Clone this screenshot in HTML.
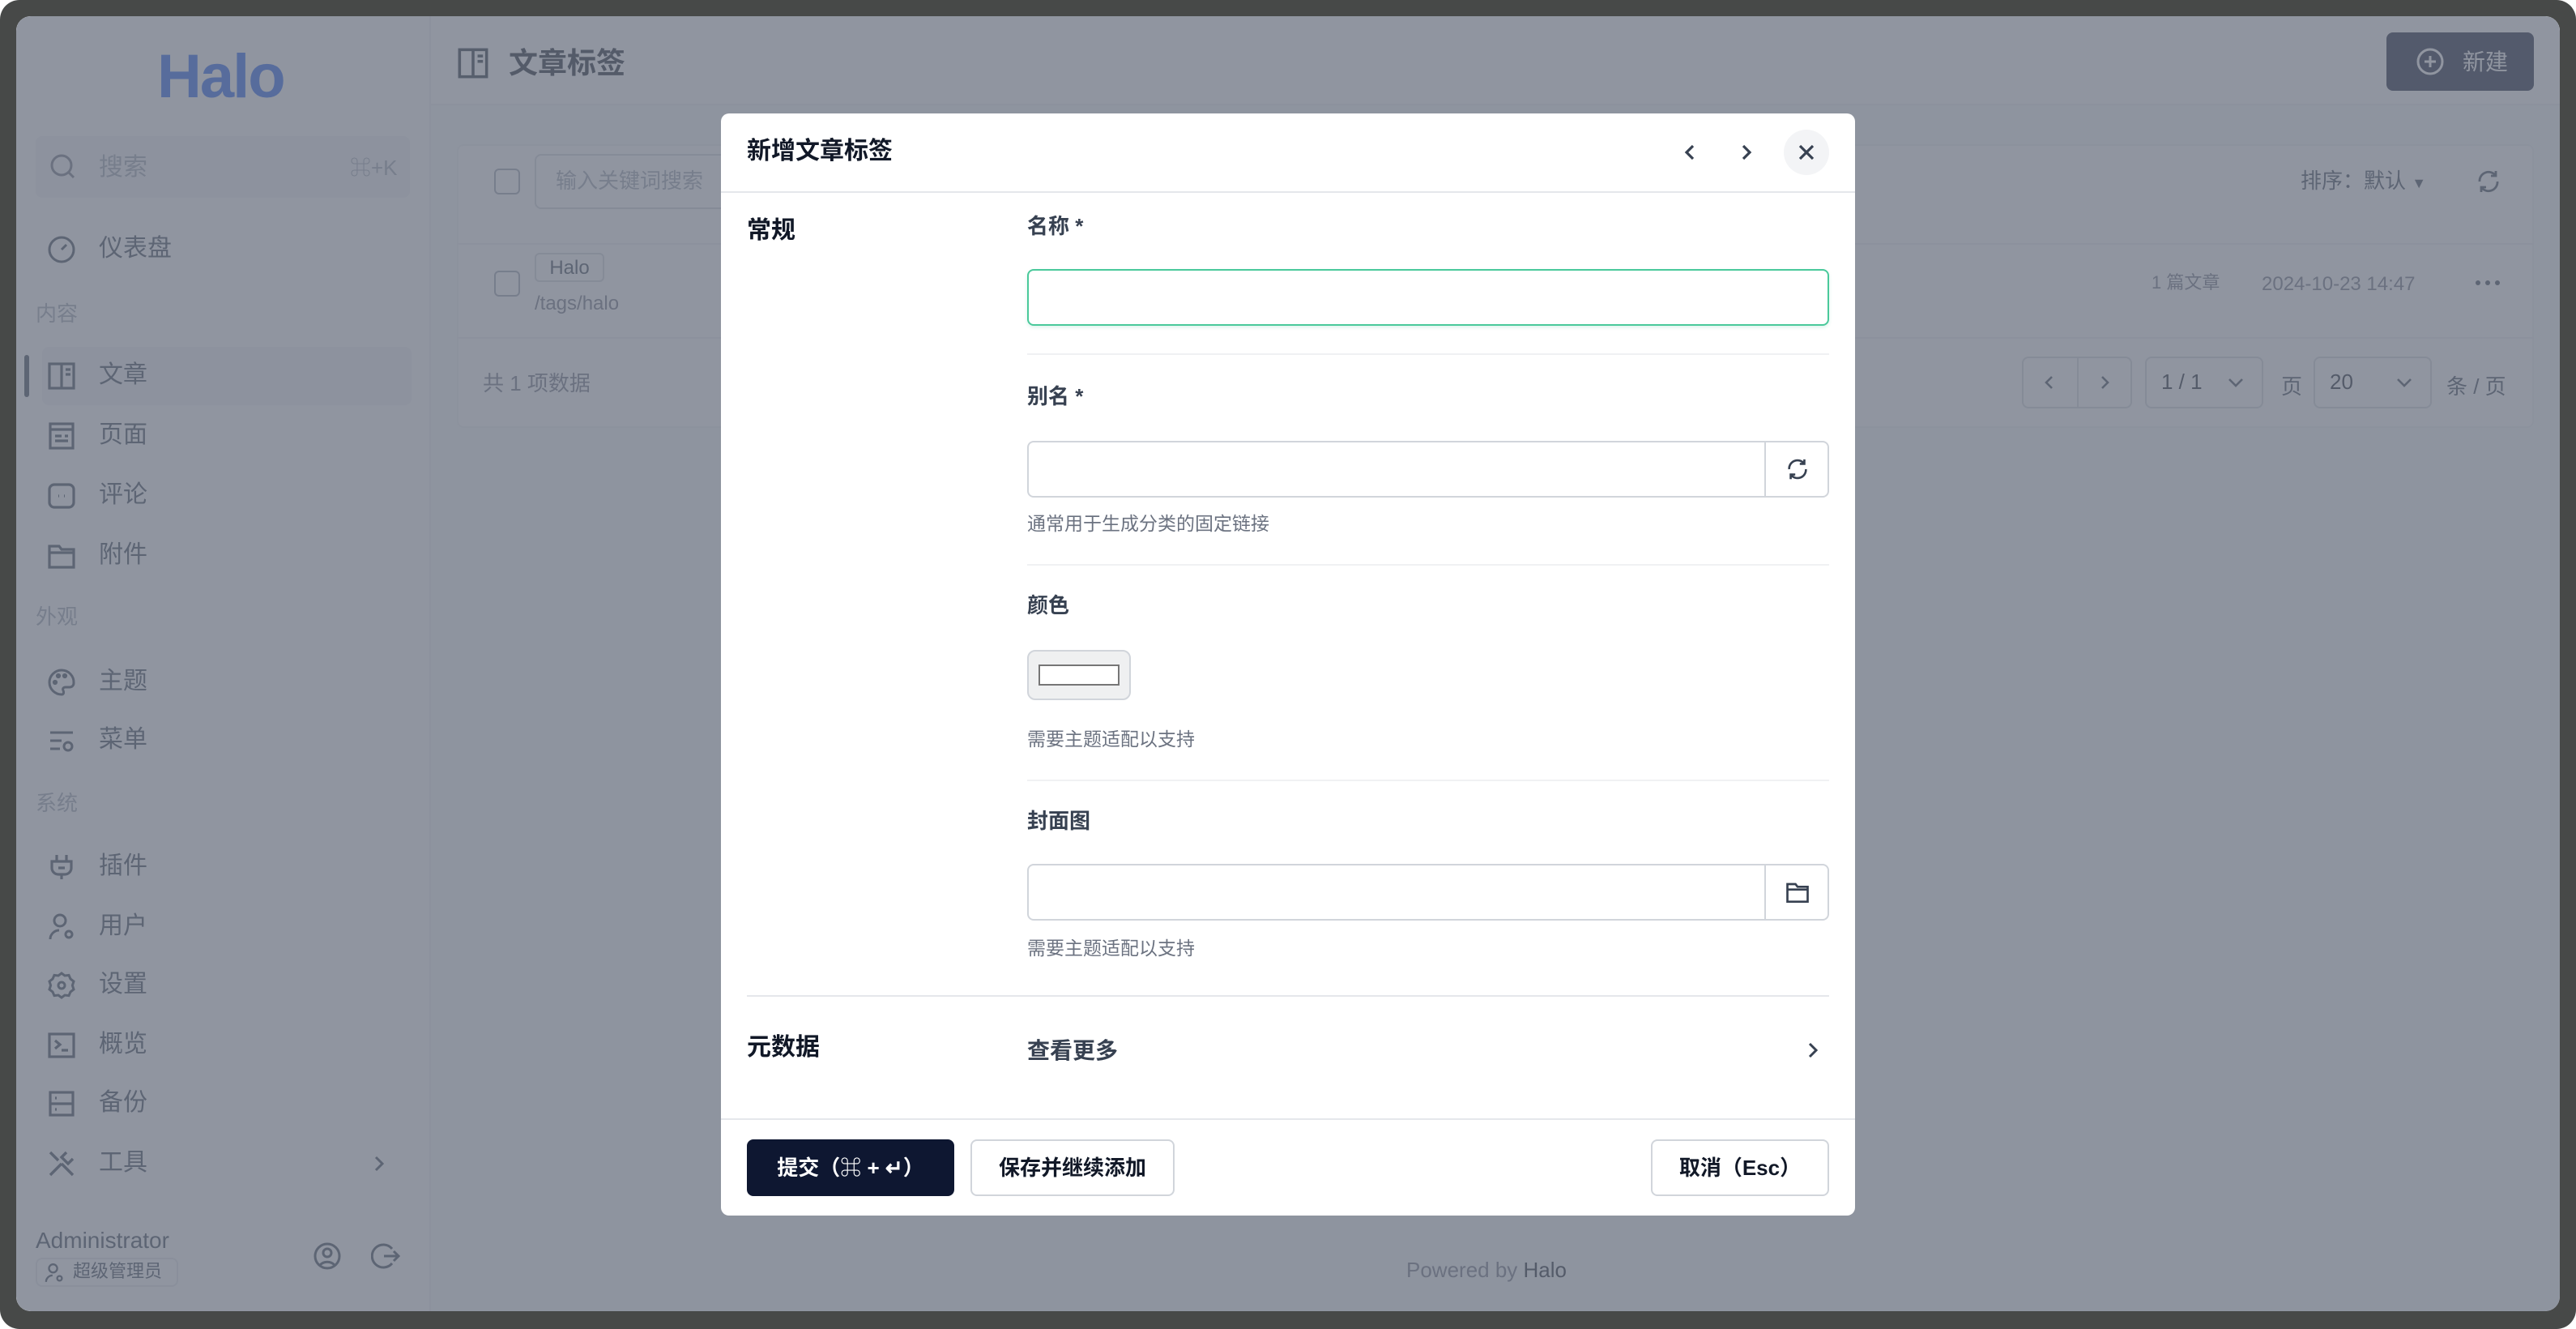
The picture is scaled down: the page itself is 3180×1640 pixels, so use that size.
<!DOCTYPE html>
<html><head><meta charset="utf-8">
<style>
*{box-sizing:border-box;margin:0;padding:0}
html,body{width:3180px;height:1640px;overflow:hidden;background:#fff}
#s{position:absolute;left:0;top:0;width:1590px;height:820px;transform:scale(2);transform-origin:0 0;font-family:"Liberation Sans","Noto Sans CJK SC",sans-serif;color:#1f2937}
.frame{position:absolute;left:0;top:0;width:1590px;height:820px;background:#474948;border-radius:12px}
.inner{position:absolute;left:10px;top:10px;width:1570px;height:799px;border-radius:9px;overflow:hidden;background:#f8fafc}
.a{position:absolute}
.side{position:absolute;left:0;top:0;width:256px;height:799px;background:#fff;border-right:1px solid #eef0f3}
.mi{position:absolute;left:0;height:20px;line-height:20px;font-size:15px;color:#374151}
.mi svg{position:absolute;left:19px;top:1px}
.mi span{position:absolute;left:51px;top:0;white-space:nowrap}
.lab{position:absolute;left:12px;font-size:13px;color:#9ca3af;line-height:16px}
.ov{position:absolute;left:0;top:0;width:1570px;height:799px;background:rgba(107,114,128,0.75)}
.modal{position:absolute;left:435px;top:60px;width:700px;height:680px;background:#fff;border-radius:5px;overflow:hidden}
.fl{position:absolute;left:189px;font-size:13px;font-weight:bold;color:#374151;line-height:18px}
.inp{position:absolute;left:189px;width:495px;height:35px;border:1px solid #d1d5db;border-radius:4px;background:#fff}
.help{position:absolute;left:189px;font-size:11.5px;color:#6b7280;line-height:16px}
.div{position:absolute;left:189px;width:495px;height:1px;background:#f0f1f3}
.btn{position:absolute;top:633px;height:35px;border:1px solid #d1d5db;border-radius:4px;font-size:13px;font-weight:bold;line-height:33px;text-align:center;background:#fff;color:#111827}
</style></head><body><div id="s">
<div class="frame"></div>
<div class="inner">
 <div class="side">
  <div class="a" style="left:87px;top:18px;font-size:38px;font-weight:bold;color:#1e5ef0;letter-spacing:-1px;line-height:40px">Halo</div>
  <div class="a" style="left:12px;top:74px;width:231px;height:38px;background:#f3f4f6;border-radius:4px"></div>
  <svg class="a" style="left:20px;top:84px" width="18" height="18" viewBox="0 0 18 18" fill="none" stroke="#6b7280" stroke-width="1.5"><circle cx="8" cy="8" r="6"/><path d="M12.5 12.5l3 3"/></svg>
  <div class="a" style="left:51px;top:84px;font-size:15px;color:#9ca3af;line-height:20px">搜索</div>
  <div class="a" style="left:206px;top:85px;font-size:13px;color:#9ca3af;line-height:18px">⌘+K</div>

  <div class="mi" style="top:134px"><svg width="18" height="18" viewBox="0 0 18 18" fill="none" stroke="#374151" stroke-width="1.5"><circle cx="9" cy="9" r="7.5"/><path d="M9 9l3-3M5 9h0M6 6h0M9 4.5h0"/></svg><span>仪表盘</span></div>
  <div class="lab" style="top:176px">内容</div>
  <div class="a" style="left:16px;top:204px;width:228px;height:36px;background:#f3f4f6;border-radius:4px"></div>
  <div class="a" style="left:5px;top:209px;width:3px;height:26px;background:#374151;border-radius:2px"></div>
  <div class="mi" style="top:212px"><svg width="18" height="18" viewBox="0 0 18 18" fill="none" stroke="#374151" stroke-width="1.6"><rect x="1.5" y="1.5" width="15" height="15"/><path d="M9 1.5v15M11.5 5h3M11.5 8h3"/></svg><span>文章</span></div>
  <div class="mi" style="top:249px"><svg width="18" height="18" viewBox="0 0 18 18" fill="none" stroke="#374151" stroke-width="1.6"><rect x="2" y="1.5" width="14" height="15"/><path d="M2 5h14M5 9h4M5 12h8M11 9h2"/></svg><span>页面</span></div>
  <div class="mi" style="top:286px"><svg width="18" height="18" viewBox="0 0 18 18" fill="none" stroke="#374151" stroke-width="1.6"><rect x="1.5" y="2" width="15" height="14" rx="3"/><path d="M7 9h.5M10.5 9h.5"/></svg><span>评论</span></div>
  <div class="mi" style="top:323px"><svg width="18" height="18" viewBox="0 0 18 18" fill="none" stroke="#374151" stroke-width="1.6"><path d="M1.5 3h6l1.5 2h7.5v11h-15zM1.5 7h15"/></svg><span>附件</span></div>
  <div class="lab" style="top:363px">外观</div>
  <div class="mi" style="top:401px"><svg width="18" height="18" viewBox="0 0 18 18" fill="none" stroke="#374151" stroke-width="1.5"><path d="M9 1.5a7.5 7.5 0 1 0 0 15c1.5 0 1.5-1.5 1-2.5s0-2 1.5-2H14a2.5 2.5 0 0 0 2.5-2.5A7.5 7.5 0 0 0 9 1.5z"/><circle cx="5" cy="9" r=".8"/><circle cx="7" cy="5" r=".8"/><circle cx="11" cy="5" r=".8"/></svg><span>主题</span></div>
  <div class="mi" style="top:437px"><svg width="18" height="18" viewBox="0 0 18 18" fill="none" stroke="#374151" stroke-width="1.5"><path d="M2 4h14M2 9h7M2 14h6"/><circle cx="13" cy="12.5" r="2.5"/></svg><span>菜单</span></div>
  <div class="lab" style="top:478px">系统</div>
  <div class="mi" style="top:515px"><svg width="18" height="18" viewBox="0 0 18 18" fill="none" stroke="#374151" stroke-width="1.6"><path d="M6 1.5v4M12 1.5v4M3 5.5h12v4a4 4 0 0 1-4 4H7a4 4 0 0 1-4-4zM9 13.5v3M7 9.5h4"/></svg><span>插件</span></div>
  <div class="mi" style="top:552px"><svg width="18" height="18" viewBox="0 0 18 18" fill="none" stroke="#374151" stroke-width="1.5"><circle cx="8" cy="5" r="3.5"/><path d="M2 16.5c0-3 2.5-5.5 5.5-5.5"/><circle cx="13.5" cy="13.5" r="2"/></svg><span>用户</span></div>
  <div class="mi" style="top:588px"><svg width="18" height="18" viewBox="0 0 18 18" fill="none" stroke="#374151" stroke-width="1.5"><path d="M9 1.5l2 1.5 2.5-.3 1 2.3 2 1.5-.8 2.5.8 2.5-2 1.5-1 2.3-2.5-.3-2 1.5-2-1.5-2.5.3-1-2.3-2-1.5.8-2.5-.8-2.5 2-1.5 1-2.3 2.5.3z"/><circle cx="9" cy="9" r="2"/></svg><span>设置</span></div>
  <div class="mi" style="top:625px"><svg width="18" height="18" viewBox="0 0 18 18" fill="none" stroke="#374151" stroke-width="1.6"><rect x="1.5" y="2" width="15" height="14"/><path d="M5 6l3 2.5L5 11M9 12h4"/></svg><span>概览</span></div>
  <div class="mi" style="top:661px"><svg width="18" height="18" viewBox="0 0 18 18" fill="none" stroke="#374151" stroke-width="1.6"><rect x="2" y="2" width="14" height="14"/><path d="M2 9h14M5 5.5h1M5 12.5h1"/></svg><span>备份</span></div>
  <div class="mi" style="top:698px"><svg width="18" height="18" viewBox="0 0 18 18" fill="none" stroke="#374151" stroke-width="1.7"><path d="M2 2l5 5M2 16l7-7M16 16L9 9M12 2l-3 3 4 4 3-3"/></svg><span>工具</span></div>
  <svg class="a" style="left:218px;top:702px" width="12" height="12" viewBox="0 0 12 12" fill="none" stroke="#374151" stroke-width="1.5"><path d="M4 2l4 4-4 4"/></svg>

  <div class="a" style="left:12px;top:746px;font-size:14px;color:#374151;line-height:18px">Administrator</div>
  <div class="a" style="left:12px;top:766px;width:88px;height:18px;border:1px solid #e5e7eb;border-radius:4px;font-size:11px;color:#374151;line-height:16px;padding-left:22px">超级管理员</div>
  <svg class="a" style="left:17px;top:769px" width="13" height="13" viewBox="0 0 18 18" fill="none" stroke="#374151" stroke-width="1.6"><circle cx="8" cy="5" r="3.5"/><path d="M2 16.5c0-3 2.5-5.5 5.5-5.5"/><circle cx="13.5" cy="13.5" r="2"/></svg>
  <svg class="a" style="left:183px;top:756px" width="18" height="18" viewBox="0 0 18 18" fill="none" stroke="#374151" stroke-width="1.5"><circle cx="9" cy="9" r="7.5"/><circle cx="9" cy="7" r="2.5"/><path d="M4.5 14.5c2.5-2.5 6.5-2.5 9 0"/></svg>
  <svg class="a" style="left:219px;top:756px" width="18" height="18" viewBox="0 0 18 18" fill="none" stroke="#374151" stroke-width="1.5"><path d="M13 4.5A7 7 0 1 0 13 13.5M8 9h9M14 6l3 3-3 3"/></svg>
 </div>

 <div class="a" style="left:256px;top:0;width:1314px;height:55px;background:#fff;border-bottom:1px solid #eef0f3"></div>
 <svg class="a" style="left:272px;top:19px" width="20" height="20" viewBox="0 0 18 18" fill="none" stroke="#1f2937" stroke-width="1.6"><rect x="1.5" y="1.5" width="15" height="15"/><path d="M9 1.5v15M11.5 5h3M11.5 8h3"/></svg>
 <div class="a" style="left:304px;top:18px;font-size:18px;font-weight:bold;color:#111827;line-height:22px">文章标签</div>
 <div class="a" style="left:1463px;top:10px;width:91px;height:36px;background:#0e1731;border-radius:4px"></div>
 <svg class="a" style="left:1481px;top:19px" width="18" height="18" viewBox="0 0 18 18" fill="none" stroke="#fff" stroke-width="1.5"><circle cx="9" cy="9" r="7.5"/><path d="M9 5.5v7M5.5 9h7"/></svg>
 <div class="a" style="left:1510px;top:19px;font-size:14px;color:#fff;line-height:18px">新建</div>

 <div class="a" style="left:272px;top:79px;width:1282px;height:175px;background:#fff;border-radius:4px;border:1px solid #f0f1f3"></div>
 <div class="a" style="left:272px;top:140px;width:1282px;height:1px;background:#eef0f3"></div>
 <div class="a" style="left:272px;top:198px;width:1282px;height:1px;background:#eef0f3"></div>
 <div class="a" style="left:295px;top:94px;width:16px;height:16px;border:1px solid #9ca3af;border-radius:3px"></div>
 <div class="a" style="left:320px;top:85px;width:200px;height:34px;border:1px solid #d1d5db;border-radius:4px;font-size:13px;color:#9ca3af;line-height:32px;padding-left:12px">输入关键词搜索</div>
 <div class="a" style="left:1410px;top:93px;font-size:13px;color:#374151;line-height:18px">排序：默认 <span style="font-size:9px">▼</span></div>
 <svg class="a" style="left:1518px;top:94px" width="16" height="16" viewBox="0 0 16 16" fill="none" stroke="#374151" stroke-width="1.4"><path d="M13.5 8A5.5 5.5 0 0 1 3.5 11.5M2.5 8A5.5 5.5 0 0 1 12.5 4.5M12.5 1.5v3h-3M3.5 14.5v-3h3"/></svg>
 <div class="a" style="left:295px;top:157px;width:16px;height:16px;border:1px solid #9ca3af;border-radius:3px"></div>
 <div class="a" style="left:320px;top:146px;width:43px;height:18px;border:1px solid #d1d5db;border-radius:3px;font-size:12px;color:#374151;line-height:16px;text-align:center">Halo</div>
 <div class="a" style="left:320px;top:169px;font-size:12px;color:#6b7280;line-height:16px">/tags/halo</div>
 <div class="a" style="left:1318px;top:157px;font-size:11px;color:#6b7280;line-height:16px">1 篇文章</div>
 <div class="a" style="left:1386px;top:157px;font-size:12px;color:#6b7280;line-height:16px">2024-10-23 14:47</div>
 <div class="a" style="left:1518px;top:163px;width:3px;height:3px;border-radius:2px;background:#374151;box-shadow:6px 0 #374151,12px 0 #374151"></div>
 <div class="a" style="left:288px;top:218px;font-size:13px;color:#6b7280;line-height:18px">共 1 项数据</div>
 <div class="a" style="left:1238px;top:210px;width:68px;height:32px;border:1px solid #d1d5db;border-radius:4px"></div>
 <div class="a" style="left:1272px;top:210px;width:1px;height:32px;background:#d1d5db"></div>
 <svg class="a" style="left:1249px;top:220px" width="12" height="12" viewBox="0 0 12 12" fill="none" stroke="#374151" stroke-width="1.3"><path d="M7.5 2.5L4 6l3.5 3.5"/></svg>
 <svg class="a" style="left:1283px;top:220px" width="12" height="12" viewBox="0 0 12 12" fill="none" stroke="#374151" stroke-width="1.3"><path d="M4.5 2.5L8 6 4.5 9.5"/></svg>
 <div class="a" style="left:1314px;top:210px;width:73px;height:32px;border:1px solid #d1d5db;border-radius:4px;font-size:13px;color:#111827;line-height:30px;padding-left:9px">1 / 1</div>
 <svg class="a" style="left:1364px;top:221px" width="12" height="10" viewBox="0 0 12 10" fill="none" stroke="#374151" stroke-width="1.3"><path d="M2 3l4 4 4-4"/></svg>
 <div class="a" style="left:1398px;top:218px;font-size:13px;color:#374151">页</div>
 <div class="a" style="left:1418px;top:210px;width:73px;height:32px;border:1px solid #d1d5db;border-radius:4px;font-size:13px;color:#111827;line-height:30px;padding-left:9px">20</div>
 <svg class="a" style="left:1468px;top:221px" width="12" height="10" viewBox="0 0 12 10" fill="none" stroke="#374151" stroke-width="1.3"><path d="M2 3l4 4 4-4"/></svg>
 <div class="a" style="left:1500px;top:218px;font-size:13px;color:#374151">条 / 页</div>
 <div class="a" style="left:858px;top:766px;font-size:13px;color:#6b7280;line-height:16px">Powered by <span style="color:#111827">Halo</span></div>

 <div class="ov"></div>

 <div class="modal">
  <div class="a" style="left:16px;top:14px;font-size:15px;font-weight:bold;color:#111827;line-height:20px">新增文章标签</div>
  <svg class="a" style="left:591px;top:17px" width="14" height="14" viewBox="0 0 14 14" fill="none" stroke="#374151" stroke-width="1.6"><path d="M9 3L5 7l4 4"/></svg>
  <svg class="a" style="left:626px;top:17px" width="14" height="14" viewBox="0 0 14 14" fill="none" stroke="#374151" stroke-width="1.6"><path d="M5 3l4 4-4 4"/></svg>
  <div class="a" style="left:656px;top:10px;width:28px;height:28px;border-radius:50%;background:#f3f4f6"></div>
  <svg class="a" style="left:663px;top:17px" width="14" height="14" viewBox="0 0 14 14" fill="none" stroke="#374151" stroke-width="1.6"><path d="M3 3l8 8M11 3l-8 8"/></svg>
  <div class="a" style="left:0;top:48px;width:700px;height:1px;background:#e5e7eb"></div>

  <div class="a" style="left:16px;top:63px;font-size:15px;font-weight:bold;color:#111827;line-height:20px">常规</div>
  <div class="fl" style="top:61px">名称 *</div>
  <div class="inp" style="top:96px;border-color:#4ac99b;box-shadow:0 1px 2px rgba(74,201,155,.2)"></div>
  <div class="div" style="top:148px"></div>
  <div class="fl" style="top:166px">别名 *</div>
  <div class="inp" style="top:202px"></div>
  <div class="a" style="left:644px;top:202px;width:1px;height:35px;background:#d1d5db"></div>
  <svg class="a" style="left:657px;top:212px" width="15" height="15" viewBox="0 0 16 16" fill="none" stroke="#374151" stroke-width="1.4"><path d="M13.5 8A5.5 5.5 0 0 1 3.5 11.5M2.5 8A5.5 5.5 0 0 1 12.5 4.5M12.5 1.5v3h-3M3.5 14.5v-3h3"/></svg>
  <div class="help" style="top:246px">通常用于生成分类的固定链接</div>
  <div class="div" style="top:278px"></div>
  <div class="fl" style="top:295px">颜色</div>
  <div class="a" style="left:189px;top:331px;width:64px;height:31px;background:#eff0f1;border:1px solid #d1d5db;border-radius:5px"></div>
  <div class="a" style="left:196px;top:340px;width:50px;height:13px;background:#fff;border:1px solid #767676"></div>
  <div class="help" style="top:379px">需要主题适配以支持</div>
  <div class="div" style="top:411px"></div>
  <div class="fl" style="top:428px">封面图</div>
  <div class="inp" style="top:463px"></div>
  <div class="a" style="left:644px;top:463px;width:1px;height:35px;background:#d1d5db"></div>
  <svg class="a" style="left:657px;top:473px" width="15" height="15" viewBox="0 0 18 18" fill="none" stroke="#374151" stroke-width="1.6"><path d="M1.5 3h6l1.5 2h7.5v11h-15zM1.5 7h15"/></svg>
  <div class="help" style="top:508px">需要主题适配以支持</div>
  <div class="a" style="left:16px;top:544px;width:668px;height:1px;background:#e5e7eb"></div>
  <div class="a" style="left:16px;top:567px;font-size:15px;font-weight:bold;color:#111827;line-height:20px">元数据</div>
  <div class="a" style="left:189px;top:569px;font-size:14px;font-weight:bold;color:#374151;line-height:18px">查看更多</div>
  <svg class="a" style="left:668px;top:572px" width="12" height="12" viewBox="0 0 12 12" fill="none" stroke="#374151" stroke-width="1.5"><path d="M4 2l4 4-4 4"/></svg>
  <div class="a" style="left:0;top:620px;width:700px;height:1px;background:#e5e7eb"></div>
  <div class="btn" style="left:16px;width:128px;background:#0e1731;border-color:#0e1731;color:#fff">提交（⌘ + ↵）</div>
  <div class="btn" style="left:154px;width:126px">保存并继续添加</div>
  <div class="btn" style="left:574px;width:110px">取消（Esc）</div>
 </div>
</div>
</div></body></html>
